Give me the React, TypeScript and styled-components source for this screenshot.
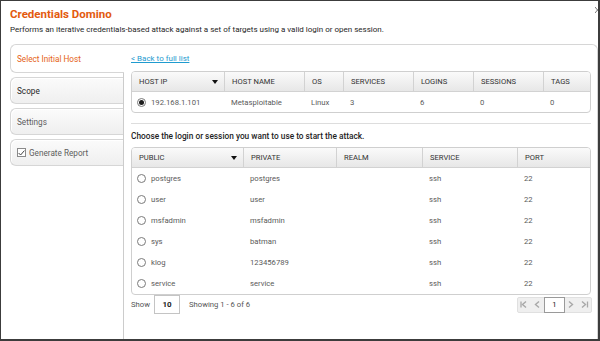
import React from "react";
import styled, {createGlobalStyle} from "styled-components";

const GlobalStyle = createGlobalStyle`
  html, body {
    margin: 0;
    padding: 0;
    background: #ffffff;
  }
  body {
    font-family: Roboto, "Liberation Sans", Arial, sans-serif;
  }
`;

const Frame = styled.div`
  position: relative;
  width: 600px;
  height: 341px;
  box-sizing: border-box;
  border-style: solid;
  border-color: #3c3c3c;
  border-width: 1px 2px 2px 1px;
  background: #ffffff;
  padding: 5px 0 0 9px;
  display: flex;
  flex-direction: column;
  overflow: hidden;
`;

const Close = styled.svg`
  position: absolute;
  top: 6px;
  right: -2px;
`;

const Title = styled.h1`
  margin: 0;
  font-size: 11.5px;
  line-height: 16px;
  font-weight: 700;
  color: #e35a0e;
`;

const Description = styled.p`
  margin: 3px 0 0;
  font-size: 8px;
  line-height: 10px;
  color: #262626;
`;

const Body = styled.div`
  flex: 1;
  display: flex;
  margin-top: 9px;
  min-height: 0;
`;

const Sidebar = styled.div`
  width: 113px;
  display: flex;
  flex-direction: column;
  gap: 4px;
  flex-shrink: 0;
`;

const Tab = styled.div<{ $active?: boolean; $dim?: boolean }>`
  position: relative;
  z-index: ${(p) => (p.$active ? 2 : 0)};
  height: ${(p) => (p.$active ? "29px" : "27px")};
  box-sizing: border-box;
  margin-right: ${(p) => (p.$active ? "-1px" : "0")};
  border: 1px solid #d6d6d6;
  border-right: none;
  border-radius: 6px 0 0 6px;
  background: ${(p) =>
    p.$active ? "#ffffff" : "linear-gradient(#fbfbfb, #efefef)"};
  box-shadow: ${(p) => (p.$active ? "none" : "inset 1px 1px 0 #ffffff")};
  display: flex;
  align-items: center;
  gap: 3px;
  padding-left: 6px;
  font-size: 8.2px;
  color: ${(p) => (p.$active ? "#e55f17" : p.$dim ? "#5e5e5e" : "#262626")};
`;

const Check = styled.span`
  width: 9px;
  height: 9px;
  box-sizing: border-box;
  border: 1px solid #8a8a8a;
  background: #fff;
  display: flex;
  align-items: center;
  justify-content: center;
`;

const Main = styled.div`
  flex: 1;
  min-width: 0;
  border-top: 1px solid #d6d6d6;
  border-left: 1px solid #cccccc;
  border-right: 1px solid #d6d6d6;
  border-top-right-radius: 6px;
  padding: 0 6px 0 7px;
  display: flex;
  flex-direction: column;
`;

const BackLink = styled.a`
  margin-top: 9px;
  font-size: 8px;
  line-height: 10px;
  color: #1f9bcf;
  text-decoration: underline;
  align-self: flex-start;
`;

const Grid = styled.div<{ $top: number }>`
  margin-top: ${(p) => p.$top}px;
  border: 1px solid #cfcfcf;
  border-radius: 4px;
  overflow: hidden;
`;

const HeadRow = styled.div<{ $cols: string }>`
  display: grid;
  grid-template-columns: ${(p) => p.$cols};
  height: 19px;
  background: linear-gradient(#fafafa, #e7e7e7);
  border-bottom: 1px solid #d2d2d2;
`;

const HeadCell = styled.div`
  display: flex;
  align-items: center;
  justify-content: space-between;
  padding: 0 6px 0 7px;
  font-size: 7.6px;
  color: #333;
  text-transform: uppercase;
  border-left: 1px solid #d2d2d2;
  &:first-child {
    border-left: none;
  }
`;

const SortArrow = styled.span`
  width: 0;
  height: 0;
  border-left: 3.5px solid transparent;
  border-right: 3.5px solid transparent;
  border-top: 4px solid #111;
`;

const Row = styled.div<{ $cols: string; $h: number }>`
  display: grid;
  grid-template-columns: ${(p) => p.$cols};
  height: ${(p) => p.$h}px;
`;

const Cell = styled.div`
  display: flex;
  align-items: center;
  gap: 5px;
  padding-left: 7px;
  font-size: 7.7px;
  color: #5a5a5a;
  white-space: nowrap;
  &:first-child {
    padding-left: 5px;
  }
`;

const Radio = styled.span<{ $on?: boolean }>`
  width: 9px;
  height: 9px;
  box-sizing: border-box;
  border-radius: 50%;
  border: 1px solid #7a7a7a;
  background: #fff;
  display: flex;
  align-items: center;
  justify-content: center;
  &::after {
    content: "";
    display: ${(p) => (p.$on ? "block" : "none")};
    width: 5px;
    height: 5px;
    border-radius: 50%;
    background: #1e1e1e;
  }
`;

const Divider = styled.hr`
  margin: 10px 0 0;
  border: none;
  border-top: 1px solid #dddddd;
`;

const Prompt = styled.div`
  margin-top: 7px;
  font-size: 8.3px;
  line-height: 10px;
  font-weight: 500;
  color: #1e1e1e;
`;

const Footer = styled.div`
  display: flex;
  align-items: center;
  height: 19px;
  font-size: 7.7px;
  color: #555;
`;

const ShowBox = styled.span`
  width: 26px;
  height: 19px;
  box-sizing: border-box;
  margin: 0 9px 0 4px;
  border: 1px solid #c4c4c4;
  display: flex;
  align-items: center;
  justify-content: center;
  font-size: 8px;
  font-weight: 700;
  color: #222;
`;

const Pager = styled.div`
  margin-left: auto;
  margin-right: -1px;
  display: flex;
  align-items: center;
  height: 16px;
  box-sizing: border-box;
  border: 1px solid #e0e0e0;
  border-radius: 2px;
  background: #efefef;
`;

const PagerBtn = styled.span`
  width: 13px;
  height: 14px;
  display: flex;
  align-items: center;
  justify-content: center;
`;

const PageBox = styled.span`
  width: 21px;
  height: 16px;
  box-sizing: border-box;
  margin: -1px 0;
  border: 1px solid #9a9a9a;
  background: #fff;
  display: flex;
  align-items: center;
  justify-content: center;
  font-size: 7.6px;
  color: #222;
`;

const hostCols = "92px 80px 39px 70px 60px 70px 1fr";
const credCols = "111px 93px 86px 95px 1fr";

const creds = [
  ["postgres", "postgres"],
  ["user", "user"],
  ["msfadmin", "msfadmin"],
  ["sys", "batman"],
  ["klog", "123456789"],
  ["service", "service"],
];

function Chevron({dir, bar}: { dir: "l" | "r"; bar?: boolean }) {
  const d = dir === "l" ? "M6 1.5 L2.5 4.5 L6 7.5" : "M2 1.5 L5.5 4.5 L2 7.5";
  return (
    <svg width="9" height="9" viewBox="0 0 9 9">
      <path d={d} fill="none" stroke="#a8a8a8" strokeWidth="1.4"/>
      {bar && (
        <line
          x1={dir === "l" ? 1 : 7.5}
          y1="1.5"
          x2={dir === "l" ? 1 : 7.5}
          y2="7.5"
          stroke="#a8a8a8"
          strokeWidth="1.3"
        />
      )}
    </svg>
  );
}

export default function App() {
  return (
    <>
      <GlobalStyle/>
      <Frame>
        <Close width="5" height="6" viewBox="0 0 5 6">
          <path d="M0 0 L5 6 M5 0 L0 6" stroke="#777" strokeWidth="1"/>
        </Close>
        <Title>Credentials Domino</Title>
        <Description>
          Performs an iterative credentials-based attack against a set of targets using a valid login or open session.
        </Description>
        <Body>
          <Sidebar>
            <Tab $active>Select Initial Host</Tab>
            <Tab>Scope</Tab>
            <Tab $dim>Settings</Tab>
            <Tab $dim>
              <Check>
                <svg width="7" height="6" viewBox="0 0 7 6">
                  <path d="M0.6 3 L2.6 5 L6.4 0.6" fill="none" stroke="#444" strokeWidth="1"/>
                </svg>
              </Check>
              Generate Report
            </Tab>
          </Sidebar>
          <Main>
            <BackLink href="#">&lt; Back to full list</BackLink>
            <Grid $top={7}>
              <HeadRow $cols={hostCols}>
                <HeadCell>Host IP<SortArrow/></HeadCell>
                <HeadCell>Host Name</HeadCell>
                <HeadCell>OS</HeadCell>
                <HeadCell>Services</HeadCell>
                <HeadCell>Logins</HeadCell>
                <HeadCell>Sessions</HeadCell>
                <HeadCell>Tags</HeadCell>
              </HeadRow>
              <Row $cols={hostCols} $h={20}>
                <Cell><Radio $on/>192.168.1.101</Cell>
                <Cell>Metasploitable</Cell>
                <Cell>Linux</Cell>
                <Cell>3</Cell>
                <Cell>6</Cell>
                <Cell>0</Cell>
                <Cell>0</Cell>
              </Row>
            </Grid>
            <Divider/>
            <Prompt>Choose the login or session you want to use to start the attack.</Prompt>
            <Grid $top={6}>
              <HeadRow $cols={credCols}>
                <HeadCell>Public<SortArrow/></HeadCell>
                <HeadCell>Private</HeadCell>
                <HeadCell>Realm</HeadCell>
                <HeadCell>Service</HeadCell>
                <HeadCell>Port</HeadCell>
              </HeadRow>
              {creds.map(([pub, priv]) => (
                <Row key={pub} $cols={credCols} $h={21}>
                  <Cell><Radio/>{pub}</Cell>
                  <Cell>{priv}</Cell>
                  <Cell></Cell>
                  <Cell>ssh</Cell>
                  <Cell>22</Cell>
                </Row>
              ))}
            </Grid>
            <Footer>
              Show
              <ShowBox>10</ShowBox>
              Showing 1 - 6 of 6
              <Pager>
                <PagerBtn><Chevron dir="l" bar/></PagerBtn>
                <PagerBtn><Chevron dir="l"/></PagerBtn>
                <PageBox>1</PageBox>
                <PagerBtn><Chevron dir="r"/></PagerBtn>
                <PagerBtn><Chevron dir="r" bar/></PagerBtn>
              </Pager>
            </Footer>
          </Main>
        </Body>
      </Frame>
    </>
  );
}
